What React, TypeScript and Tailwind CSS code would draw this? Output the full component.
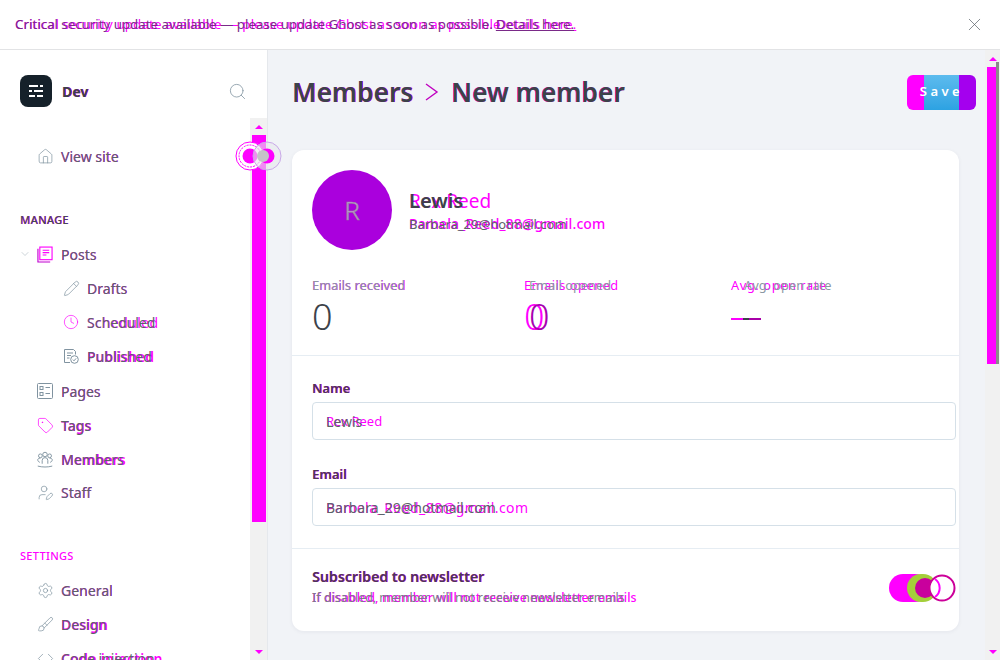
import { FC, ReactNode } from 'react';
import {
  Brush,
  Clock,
  Code,
  House,
  Pencil,
  Search,
  Settings,
  Tag,
  UserPen,
  X,
  ChevronDown,
} from 'lucide-react';

const FONT = "font-['Noto_Sans',sans-serif]";

interface GhostProps {
  text: string;
  ghost?: string;
  ghostClass?: string;
  className?: string;
  block?: boolean;
}

// magenta copy sits under the real text
const Ghost: FC<GhostProps> = ({ text, ghost, ghostClass = '', className = '', block }) => (
  <span className={`relative whitespace-nowrap ${block ? 'block' : 'inline-block'} ${className}`}>
    <span aria-hidden className={`absolute left-0 top-0 text-[#ff00ff] ${ghostClass}`}>
      {ghost ?? text}
    </span>
    <span className="relative">{text}</span>
  </span>
);

const PostsIcon = () => (
  <svg width="17" height="17" viewBox="0 0 17 17" fill="none" stroke="#ff00ff" strokeWidth="1.2">
    <rect x="3" y="0.6" width="13" height="13.4" />
    <path d="M6 4h7M6 6.5h7M6 9h4" />
    <path d="M1 2.5v14h13" stroke="#c000d0" />
  </svg>
);

const PagesIcon = () => (
  <svg width="16" height="16" viewBox="0 0 16 16" fill="none" stroke="#8093a0" strokeWidth="1">
    <rect x="0.5" y="0.5" width="15" height="15" rx="1" />
    <rect x="3" y="3.5" width="3" height="3" />
    <rect x="3" y="9.5" width="3" height="3" />
    <path d="M8.5 4.5h4.5M8.5 10.5h4.5" />
  </svg>
);

const PublishedIcon = () => (
  <svg width="16" height="16" viewBox="0 0 16 16" fill="none" stroke="#8093a0" strokeWidth="1">
    <path d="M7 14.5H1.5V1.5h9l2 2v3" />
    <path d="M4 5h6M4 7.5h4M4 10h2.5" />
    <circle cx="11.5" cy="11.5" r="3.8" />
    <path d="M9.8 11.6l1.2 1.2 2.1-2.4" />
  </svg>
);

const MembersIcon = () => (
  <svg width="17" height="17" viewBox="0 0 17 17" fill="none" stroke="#8093a0" strokeWidth="1">
    <circle cx="3.6" cy="4.6" r="2" />
    <circle cx="13.4" cy="4.6" r="2" />
    <circle cx="8.5" cy="3.2" r="2.4" />
    <path d="M5.5 13V9.5a3 3 0 0 1 6 0V13" />
    <path d="M3 11.5C1.5 11 .8 10 .8 8.8c0-1 1-1.7 2.8-1.7M14 11.5c1.5-.5 2.2-1.500 2.2-2.700 0-1-1-1.700-2.800-1.700" />
    <path d="M.8 15.500c5 1.300 10.400 1.300 15.400 0" />
  </svg>
);

interface NavRowProps {
  icon: ReactNode;
  label: string;
  ghostClass?: string;
  nested?: boolean;
  chevron?: boolean;
}

const NavRow: FC<NavRowProps> = ({ icon, label, ghostClass = 'tracking-[0.05px]', nested, chevron }) => (
  <div className={`relative flex h-[34px] items-center text-[14px] text-[#5c6369] ${nested ? 'pl-[63px]' : 'pl-[37px]'}`}>
    {chevron && (
      <ChevronDown size={12} strokeWidth={1} className="absolute left-[19px] top-[11px] text-[#9aa8b2]" />
    )}
    <span className="mr-[8px] flex w-[16px] shrink-0 items-center justify-center">{icon}</span>
    <Ghost text={label} ghostClass={ghostClass} />
  </div>
);

const ic = 'shrink-0 text-[#8093a0]';

const Sidebar = () => (
  <aside className="relative flex w-[268px] shrink-0 flex-col overflow-hidden border-r border-[#e5e8ec] bg-white">
    <div className="flex h-[68px] shrink-0 items-center pl-[20px] pr-[20px] pt-[14px]">
      <div className="flex h-[32px] w-[32px] items-center justify-center rounded-lg bg-[#15212a]">
        <svg width="16" height="14" viewBox="0 0 16 14" fill="none" stroke="#ffffff" strokeWidth="2">
          <path d="M1 2h9M12 2h3M1 7h3M6 7h9M1 12h6M9 12h6" />
        </svg>
      </div>
      <Ghost text="Dev" className="ml-[10px] text-[14px] font-bold text-[#3c4249]" ghostClass="translate-x-[0.5px]" />
      <Search size={19} strokeWidth={1} className="ml-auto text-[#8093a0]" />
    </div>

    <nav className="pt-[21px]">
      <NavRow icon={<House size={17} strokeWidth={1} className={ic} />} label="View site" />

      <div className="mt-[40px] pl-[20px] text-[11px] font-medium leading-[14px] tracking-[0.3px] text-[#444b52]">
        <Ghost text="MANAGE" ghostClass="translate-x-[0.5px]" />
      </div>
      <div className="mt-[10px]">
        <NavRow chevron icon={<PostsIcon />} label="Posts" />
        <NavRow nested icon={<Pencil size={17} strokeWidth={1} className={ic} />} label="Drafts" />
        <NavRow nested icon={<Clock size={16} strokeWidth={1} className="shrink-0 text-[#ff00ff]" />} label="Scheduled" ghostClass="tracking-[0.35px]" />
        <NavRow nested icon={<PublishedIcon />} label="Published" ghostClass="font-semibold" />
        <div className="mt-px">
          <NavRow icon={<PagesIcon />} label="Pages" />
        </div>
        <NavRow icon={<Tag size={17} strokeWidth={1} className="shrink-0 text-[#ff00ff]" />} label="Tags" ghostClass="font-semibold" />
        <NavRow icon={<MembersIcon />} label="Members" ghostClass="font-semibold" />
        <div className="-mt-px">
          <NavRow icon={<UserPen size={17} strokeWidth={1} className={ic} />} label="Staff" />
        </div>
      </div>

      <div className="mt-[40px] pl-[20px] text-[11px] font-medium leading-[14px] tracking-[0.3px] text-[#ff00ff]">
        SETTINGS
      </div>
      <div className="mt-[10px]">
        <NavRow icon={<Settings size={17} strokeWidth={1} className={ic} />} label="General" />
        <NavRow icon={<Brush size={17} strokeWidth={1} className={ic} />} label="Design" ghostClass="font-semibold" />
        <NavRow icon={<Code size={17} strokeWidth={1} className={ic} />} label="Code injection" ghostClass="tracking-[0.3px] font-semibold" />
      </div>
    </nav>

    {/* scrollbar */}
    <div className="absolute bottom-0 right-0 top-[68px] flex w-[17px] flex-col items-center bg-[#f1f1f1]">
      <div className="mt-[7px] h-0 w-0 border-x-[4px] border-b-[4px] border-x-transparent border-b-[#ff00ff]" />
      <div className="mt-[6px] h-[387px] w-[14px] bg-[#ff00ff]" />
      <div className="mb-[6px] mt-auto h-0 w-0 border-x-[4px] border-t-[4px] border-x-transparent border-t-[#ff00ff]" />
    </div>
  </aside>
);

const Rings = () => (
  <svg className="absolute left-[235px] top-[91px]" width="48" height="30" viewBox="0 0 48 30" fill="none">
    <circle cx="15" cy="15" r="14" fill="#ffffff" stroke="#ff00ff" />
    <circle cx="15" cy="15" r="11" stroke="#ff00ff" strokeDasharray="2 1" />
    <circle cx="15" cy="15" r="7.5" fill="#ff00ff" />
    <circle cx="32" cy="15" r="14" stroke="#c9a8e8" fill="#e8e8ec" fillOpacity="0.6" />
    <circle cx="32" cy="15" r="7.5" fill="#ff00ff" />
    <circle cx="28" cy="15" r="6" fill="#c4c4c8" />
  </svg>
);

interface StatProps {
  label: string;
  ghost?: string;
  value: string;
  width: string;
  labelClass?: string;
  ghostClass?: string;
  doubled?: boolean;
}

const Stat: FC<StatProps> = ({ label, ghost, value, width, labelClass = '', ghostClass = 'tracking-[0.05px]', doubled }) => (
  <div className={width}>
    <Ghost
      block
      text={label}
      ghost={ghost}
      className={`text-[12.8px] leading-[14px] text-[#8b98a3] ${labelClass}`}
      ghostClass={ghostClass}
    />
    {value === '—' ? (
      <div className="mt-[26px] flex h-[2px] w-[30px]">
        <span className="w-[12px] bg-[#ff00ff]" />
        <span className="w-[6px] bg-[#3c4249]" />
        <span className="w-[12px] bg-[#a800a8]" />
      </div>
    ) : (
      <div className="relative mt-[3px] text-[36px] font-light leading-[44px] text-[#3c4249]">
        {doubled ? (
          <>
            <span className="text-[#ff00ff]">{value}</span>
            <span className="absolute left-[5px] top-0 text-[#a800b0]">{value}</span>
          </>
        ) : (
          value
        )}
      </div>
    )}
  </div>
);

const Field: FC<{ label: string; value: string; ghost: string; ghostClass?: string }> = ({ label, value, ghost, ghostClass = '' }) => (
  <div>
    <Ghost block text={label} className="text-[13px] font-semibold leading-[14px] text-[#4b3a55]" ghostClass="translate-x-[0.5px] text-[#c000c0]" />
    <div className="mt-[7px] flex h-[38px] items-center rounded-[4px] border border-[#d5e0e8] bg-white pl-[13px] text-[14px] text-[#5c6369]">
      <Ghost text={value} ghost={ghost} ghostClass={ghostClass} />
    </div>
  </div>
);

const Card = () => (
  <section className="mr-[17px] overflow-hidden rounded-xl bg-white shadow-[0_1px_4px_rgba(30,40,60,0.06)]">
    <div className="border-b border-[#e6edf3] pl-[20px] pr-[20px] pt-[20px]">
      <div className="flex items-center">
        <div className="flex h-[80px] w-[80px] items-center justify-center rounded-full bg-[#aa00dd] text-[26px] font-light text-[#c890e0] [-webkit-text-stroke:0.6px_#8f8f8f]">
          R
        </div>
        <div className="ml-[17px]">
          <Ghost block text="Lewis" ghost="Rex Reed" className="text-[20px] font-semibold leading-[28px] text-[#3c4249]" ghostClass="text-[19px] font-normal" />
          <Ghost
            block
            text="Barbara_29@hotmail.com"
            ghost="Pamela_Reed_88@gmail.com"
            className="text-[13px] leading-[18px] text-[#5c6369]"
            ghostClass="text-[14px] font-medium tracking-[0.1px]"
          />
        </div>
      </div>
      <div className="mb-[16px] mt-[28px] flex">
        <Stat label="Emails received" value="0" width="w-[212px]" />
        <Stat label="Email opened" ghost="Emails opened" value="0" width="w-[207px]" labelClass="ml-[5px]" ghostClass="-ml-[5px] tracking-[0.5px]" doubled />
        <Stat label="Avg. open rate" value="—" width="flex-1" labelClass="ml-[13px]" ghostClass="-ml-[13px] tracking-[0.6px]" />
      </div>
    </div>

    <div className="border-b border-[#e6edf3] pb-[22px] pl-[20px] pr-[3px] pt-[25px]">
      <Field label="Name" value="Lewis" ghost="Rex Reed" ghostClass="text-[13px] leading-[21px]" />
      <div className="mt-[27px]">
        <Field label="Email" value="Barbara_29@hotmail.com" ghost="Pamela_Reed_88@gmail.com" ghostClass="tracking-[0.45px]" />
      </div>
    </div>

    <div className="flex h-[82px] items-center justify-between pb-[5px] pl-[20px] pr-[3px]">
      <div>
        <Ghost block text="Subscribed to newsletter" className="text-[14.2px] font-semibold leading-[20px] text-[#4b3a55]" ghostClass="translate-x-[0.5px]" />
        <Ghost
          block
          text="If disabled, member will not receive newsletter emails"
          className="text-[12.4px] leading-[21px] text-[#7a7f85]"
          ghostClass="tracking-[0.1px] font-medium"
        />
      </div>
      <svg width="67" height="30" viewBox="0 0 67 30">
        <rect x="0" y="1" width="40" height="28" rx="14" fill="#ff00ff" />
        <rect x="18" y="1" width="30" height="28" rx="14" fill="#a4cf3a" />
        <circle cx="36" cy="15" r="10" fill="#c9009d" />
        <circle cx="53" cy="15" r="12.500" fill="#ffffff" stroke="#cc0099" strokeWidth="2" />
        <path d="M46 6a11 11 0 0 1 0 18" fill="none" stroke="#ff00ff" strokeWidth="2" />
      </svg>
    </div>
  </section>
);

const MainScrollbar = () => (
  <div className="flex w-[15px] shrink-0 flex-col items-center bg-[#f1f1f1]">
    <div className="mt-[7px] h-0 w-0 border-x-[4px] border-b-[4px] border-x-transparent border-b-[#ff00ff]" />
    <div className="ml-[1px] mt-[1px] flex h-[302px] w-[13px]">
      <span className="mt-[5px] w-[9px] bg-[#ff00ff]" />
      <span className="w-[3px] bg-[#8a8a8a]" />
    </div>
    <div className="mb-[6px] mt-auto h-0 w-0 border-x-[4px] border-t-[4px] border-x-transparent border-t-[#ff00ff]" />
  </div>
);

export default function App() {
  return (
    <div className={`flex h-screen w-screen flex-col overflow-hidden bg-white ${FONT}`}>
      <div className="flex h-[50px] shrink-0 items-center border-b border-[#e2e3e5] pl-[15px] pr-[15px] text-[13.3px] text-[#7a2a88]">
        <Ghost
          text="Critical security update available — please update Ghost as soon as possible."
          ghostClass="tracking-[0.15px]"
        />
        <Ghost text="Details here." className="ml-[3px] underline" ghostClass="ml-[1px] tracking-[0.1px] underline" />
        <X size={21} strokeWidth={0.8} className="ml-auto text-[#555c63]" />
      </div>

      <div className="relative flex min-h-0 flex-1">
        <Sidebar />
        <Rings />
        <main className="flex min-w-0 flex-1 bg-[#f1f3f7]">
          <div className="min-w-0 flex-1 overflow-hidden pl-[24px] pr-[9px]">
            <header className="mb-[16px] flex h-[84px] items-center justify-between">
              <h1 className="flex items-center text-[26.3px] font-semibold leading-[36px] text-[#3c4249]">
                <Ghost text="Members" ghostClass="translate-x-[0.5px]" />
                <svg width="16" height="20" viewBox="0 0 16 20" fill="none" stroke="#c000c0" strokeWidth="1.4" className="mx-[11px]">
                  <path d="M2 2l11 8-11 8" />
                </svg>
                <Ghost text="New member" ghostClass="-translate-x-[0.5px]" />
              </h1>
              <button className="relative flex h-[35px] w-[69px] overflow-hidden rounded-md text-[13px] font-semibold text-white">
                <span className="w-[17px] bg-[#ff00ff]" />
                <span className="w-[35px] bg-gradient-to-b from-[#5cbbee] to-[#2ca2e2]" />
                <span className="w-[17px] bg-[#a400ee]" />
                <span className="absolute inset-0 flex items-center justify-center tracking-[3.5px]">Save</span>
              </button>
            </header>
            <Card />
          </div>
          <MainScrollbar />
        </main>
      </div>
    </div>
  );
}
